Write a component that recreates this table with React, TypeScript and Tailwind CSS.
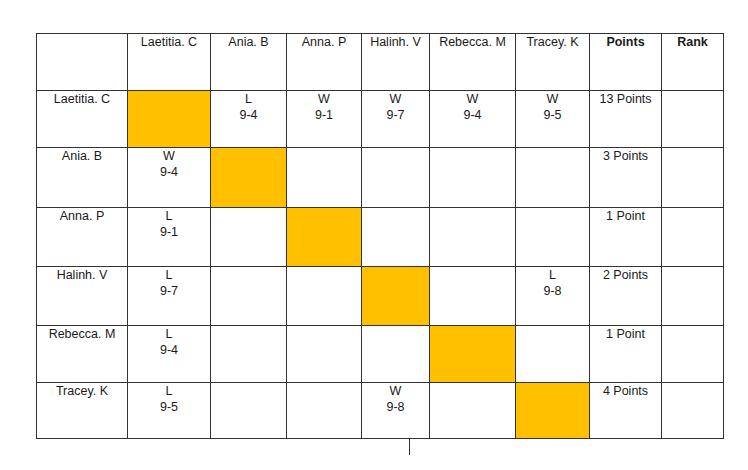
const PLAYERS = ["Laetitia. C", "Ania. B", "Anna. P", "Halinh. V", "Rebecca. M", "Tracey. K"];

// each row: results vs each player ("" = blank, null = own cell), then points
const RESULTS: { cells: (string[] | null)[]; points: string }[] = [
  { cells: [null, ["L", "9-4"], ["W", "9-1"], ["W", "9-7"], ["W", "9-4"], ["W", "9-5"]], points: "13 Points" },
  { cells: [["W", "9-4"], null, [], [], [], []], points: "3 Points" },
  { cells: [["L", "9-1"], [], null, [], [], []], points: "1 Point" },
  { cells: [["L", "9-7"], [], [], null, [], ["L", "9-8"]], points: "2 Points" },
  { cells: [["L", "9-4"], [], [], [], null, []], points: "1 Point" },
  { cells: [["L", "9-5"], [], [], ["W", "9-8"], [], null], points: "4 Points" },
];

const cell = "border-r border-b border-[#333] text-center leading-4";

export default function App() {
  return (
    <div
      className="w-[748px] h-[470px] bg-white pt-[33px] pl-[36px] text-[12.5px] text-[#1a1a1a]"
      style={{ fontFamily: '"Liberation Sans", Arial, sans-serif' }}
    >
      <div className="grid w-fit grid-cols-[91px_83px_76px_75px_68px_86px_74px_72px_62px] grid-rows-[57px_57px_60px_59px_59px_57px_56px] border-l border-t border-[#333]">
        <div className={cell} />
        {PLAYERS.map((p) => (
          <div key={p} className={cell}>
            {p}
          </div>
        ))}
        <div className={`${cell} font-bold`}>Points</div>
        <div className={`${cell} font-bold`}>Rank</div>

        {RESULTS.map((row, i) => (
          <div key={PLAYERS[i]} className="contents">
            <div className={cell}>{PLAYERS[i]}</div>
            {row.cells.map((c, j) =>
              c === null ? (
                <div key={j} className={`${cell} bg-[#ffc000]`} />
              ) : (
                <div key={j} className={cell}>
                  {c.map((t, k) => (
                    <div key={k}>{t}</div>
                  ))}
                </div>
              ),
            )}
            <div className={cell}>{row.points}</div>
            <div className={cell} />
          </div>
        ))}
      </div>
      <div className="ml-[373px] h-4 w-px bg-[#333]" />
    </div>
  );
}
